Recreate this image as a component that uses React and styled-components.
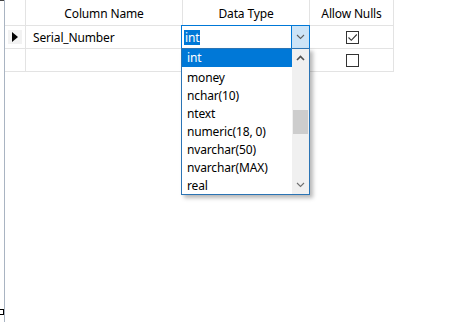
import React from "react";
import styled, { createGlobalStyle } from "styled-components";

const Global = createGlobalStyle`
  html, body { margin: 0; padding: 0; background: #fff; }
  body { font-family: "Noto Sans", "Open Sans", sans-serif; font-size: 12px; letter-spacing: -0.15px; color: #000; }
  #root { width: 461px; height: 322px; }
`;

const Page = styled.div`
  position: relative;
  width: 461px;
  height: 322px;
  box-sizing: border-box;
  padding-left: 4px;
  overflow: hidden;
`;

const Frame = styled.div`
  height: 100%;
  border-left: 1px solid #a9b4c2;
`;

const Grid = styled.div`
  display: grid;
  grid-template-columns: 21px 157px 127px 84px;
  grid-template-rows: 26px 23px 23px;
`;

const Cell = styled.div`
  position: relative;
  box-sizing: border-box;
  border-right: 1px solid #e3e3e3;
  border-bottom: 1px solid #e3e3e3;
  display: flex;
  align-items: center;
  justify-content: ${(p) => (p.$center ? "center" : "flex-start")};
  padding-left: ${(p) => (p.$pad ? "7px" : "0")};
  white-space: nowrap;
`;

const HeaderCell = styled(Cell)`
  padding-top: 1px;
`;

const RowMarker = styled.div`
  width: 14px;
  height: 14px;
  margin-left: 3px;
  background: #f2f2f2;
  display: flex;
  align-items: center;
  justify-content: center;
  &::before {
    content: "";
    border-style: solid;
    border-width: 5.5px 0 5.5px 6px;
    border-color: transparent transparent transparent #000;
  }
`;

const Combo = styled.div`
  position: absolute;
  left: -2px;
  top: -1px;
  width: 129px;
  height: 24px;
  box-sizing: border-box;
  border: 1px solid #0078d7;
  background: #fff;
  display: flex;
  align-items: stretch;
  z-index: 2;
`;

const ComboText = styled.div`
  flex: 1;
  display: flex;
  align-items: center;
  padding-left: 2px;
`;

const Selected = styled.span`
  background: #0078d7;
  color: #fff;
  padding: 0 1px;
  line-height: 15px;
`;

const ComboButton = styled.div`
  width: 17px;
  background: #cce4f7;
  border-left: 1px solid #0078d7;
  display: flex;
  align-items: center;
  justify-content: center;
`;

const DropList = styled.div`
  position: absolute;
  left: -2px;
  top: 22px;
  width: 129px;
  height: 147px;
  box-sizing: border-box;
  border: 1px solid #2b74b4;
  background: #fff;
  box-shadow: 3px 3px 4px rgba(0, 0, 0, 0.28);
  display: flex;
  z-index: 3;
`;

const Items = styled.div`
  flex: 1;
  display: flex;
  flex-direction: column;
`;

const Item = styled.div`
  height: 18px;
  line-height: 18px;
  padding-left: 5px;
  padding-top: ${(p) => (p.$active ? "0" : "1px")};
  margin-bottom: ${(p) => (p.$active ? "1px" : "0")};
  box-sizing: border-box;
  background: ${(p) => (p.$active ? "#0078d7" : "transparent")};
  color: ${(p) => (p.$active ? "#fff" : "#000")};
  white-space: nowrap;
`;

const ScrollBar = styled.div`
  width: 17px;
  background: #f0f0f0;
  display: flex;
  flex-direction: column;
`;

const ScrollArrow = styled.div`
  height: 18px;
  display: flex;
  align-items: center;
  justify-content: center;
`;

const Track = styled.div`
  flex: 1;
  display: flex;
  flex-direction: column;
  align-items: center;
  padding-top: 43px;
`;

const Thumb = styled.div`
  width: 15px;
  height: 24px;
  background: #cdcdcd;
`;

const Check = styled.div`
  width: 13px;
  height: 13px;
  box-sizing: border-box;
  border: 1px solid #333;
  background: #fff;
  display: flex;
  align-items: center;
  justify-content: center;
  margin-left: 1px;
`;

const Handle = styled.div`
  position: absolute;
  left: -1px;
  top: 309px;
  width: 5px;
  height: 6px;
  box-sizing: border-box;
  border: 1px solid #000;
  background: #fff;
`;

const TopTick = styled.div`
  position: absolute;
  left: 0;
  top: 0;
  width: 4px;
  height: 1px;
  background: #444;
`;

const Chevron = ({ up, color = "#606060" }) => (
  <svg width="9" height="6" viewBox="0 0 9 6">
    <path
      d={up ? "M1 5 L4.5 1.5 L8 5" : "M1 1 L4.5 4.5 L8 1"}
      fill="none"
      stroke={color}
      strokeWidth={up ? 1.6 : 1.1}
    />
  </svg>
);

const types = [
  "int",
  "money",
  "nchar(10)",
  "ntext",
  "numeric(18, 0)",
  "nvarchar(50)",
  "nvarchar(MAX)",
  "real",
];

export default function App() {
  return (
    <>
      <Global />
      <Page>
        <Frame>
          <Grid>
            <HeaderCell />
            <HeaderCell $center>Column Name</HeaderCell>
            <HeaderCell $center>Data Type</HeaderCell>
            <HeaderCell $center>Allow Nulls</HeaderCell>

            <Cell>
              <RowMarker />
            </Cell>
            <Cell $pad>Serial_Number</Cell>
            <Cell>
              <Combo>
                <ComboText>
                  <Selected>int</Selected>
                </ComboText>
                <ComboButton>
                  <Chevron />
                </ComboButton>
              </Combo>
              <DropList>
                <Items>
                  {types.map((t, i) => (
                    <Item key={t} $active={i === 0}>
                      {t}
                    </Item>
                  ))}
                </Items>
                <ScrollBar>
                  <ScrollArrow>
                    <Chevron up color="#505050" />
                  </ScrollArrow>
                  <Track>
                    <Thumb />
                  </Track>
                  <ScrollArrow>
                    <Chevron color="#707070" />
                  </ScrollArrow>
                </ScrollBar>
              </DropList>
            </Cell>
            <Cell $center>
              <Check>
                <svg width="11" height="11" viewBox="0 0 11 11">
                  <path d="M1.5 5.5 L4.3 8.3 L9.8 2.5" fill="none" stroke="#333" strokeWidth="1.1" />
                </svg>
              </Check>
            </Cell>

            <Cell />
            <Cell />
            <Cell />
            <Cell $center>
              <Check />
            </Cell>
          </Grid>
        </Frame>
        <TopTick />
        <Handle />
      </Page>
    </>
  );
}
